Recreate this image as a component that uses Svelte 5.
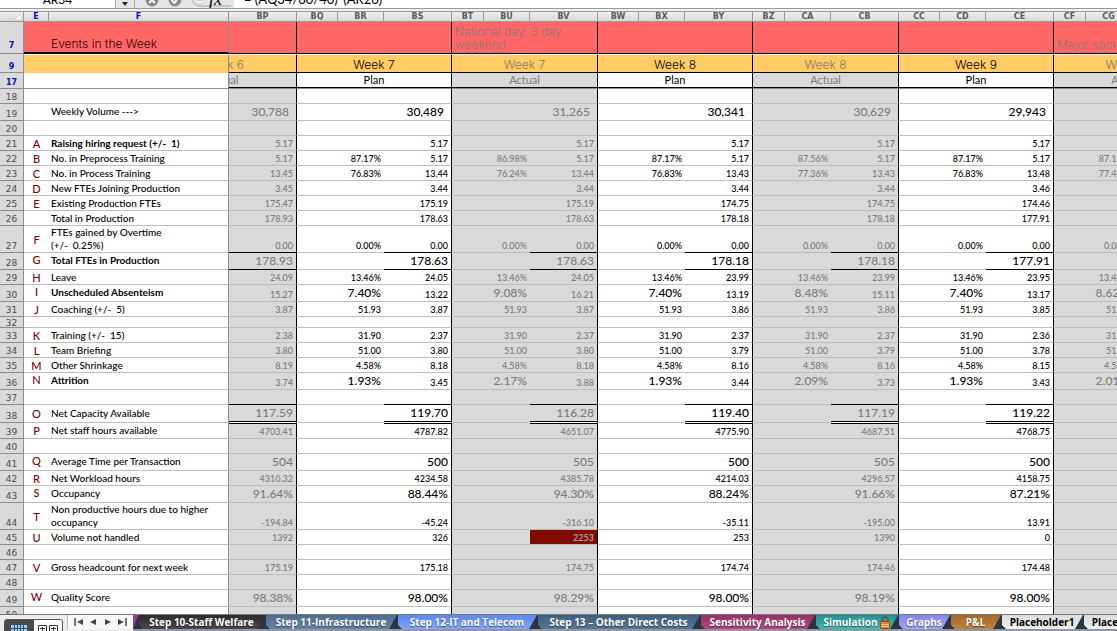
<script>
  const columns = [
    ['E', 25], ['F', 180], ['BP', 68],
    ['BQ', 41], ['BR', 46], ['BS', 68],
    ['BT', 32], ['BU', 46], ['BV', 68],
    ['BW', 41], ['BX', 46], ['BY', 68],
    ['BZ', 32], ['CA', 46], ['CB', 68],
    ['CC', 41], ['CD', 46], ['CE', 68],
    ['CF', 32], ['CG', 46], ['CH', 68]
  ];

  const weeks = [
    { week: 'Week 7', kind: 'Plan', event: '' },
    { week: 'Week 7', kind: 'Actual', event: 'National day, 3 day weekend' },
    { week: 'Week 8', kind: 'Plan', event: '' },
    { week: 'Week 8', kind: 'Actual', event: '' },
    { week: 'Week 9', kind: 'Plan', event: '' },
    { week: 'Week 9', kind: 'Actual', event: 'Major sport', low: true }
  ];

  // v: values from BP onward; p: percentage or driver column of each later week
  const rows = [
    { n: 18 },
    { n: 19, size: 'tall', label: 'Weekly Volume --->', bigV: true, inset: true, v: ['30,788', '30,489', '31,265', '30,341', '30,629', '29,943'] },
    { n: 20 },
    { n: 21, k: 'A', label: 'Raising hiring request (+/-  1)', bold: true, v: ['5.17', '5.17', '5.17', '5.17', '5.17', '5.17'] },
    { n: 22, k: 'B', label: 'No. in Preprocess Training', v: ['5.17', '5.17', '5.17', '5.17', '5.17', '5.17'], p: ['87.17%', '86.98%', '87.17%', '87.56%', '87.17%', '87.18%'] },
    { n: 23, k: 'C', label: 'No. in Process Training', v: ['13.45', '13.44', '13.44', '13.43', '13.43', '13.48'], p: ['76.83%', '76.24%', '76.83%', '77.36%', '76.83%', '77.45%'] },
    { n: 24, k: 'D', label: 'New FTEs Joining Production', v: ['3.45', '3.44', '3.44', '3.44', '3.44', '3.46'] },
    { n: 25, k: 'E', label: 'Existing Production FTEs', v: ['175.47', '175.19', '175.19', '174.75', '174.75', '174.46'] },
    { n: 26, label: 'Total in Production', v: ['178.93', '178.63', '178.63', '178.18', '178.18', '177.91'] },
    { n: 27, size: 'double', k: 'F', label: 'FTEs gained by Overtime\n(+/-  0.25%)', rule: true, v: ['0.00', '0.00', '0.00', '0.00', '0.00', '0.00'], p: ['0.00%', '0.00%', '0.00%', '0.00%', '0.00%', '0.00%'] },
    { n: 28, size: 'tall', k: 'G', label: 'Total FTEs in Production', bold: true, bigV: true, rule: true, v: ['178.93', '178.63', '178.63', '178.18', '178.18', '177.91'] },
    { n: 29, k: 'H', label: 'Leave', v: ['24.09', '24.05', '24.05', '23.99', '23.99', '23.95'], p: ['13.46%', '13.46%', '13.46%', '13.46%', '13.46%', '13.46%'] },
    { n: 30, size: 'tall', k: 'I', label: 'Unscheduled Absenteism', bold: true, bigP: true, v: ['15.27', '13.22', '16.21', '13.19', '15.11', '13.17'], p: ['7.40%', '9.08%', '7.40%', '8.48%', '7.40%', '8.62%'] },
    { n: 31, k: 'J', label: 'Coaching (+/-  5)', v: ['3.87', '3.87', '3.87', '3.86', '3.86', '3.85'], p: ['51.93', '51.93', '51.93', '51.93', '51.93', '51.93'] },
    { n: 32, size: 'short' },
    { n: 33, k: 'K', label: 'Training (+/-  15)', v: ['2.38', '2.37', '2.37', '2.37', '2.37', '2.36'], p: ['31.90', '31.90', '31.90', '31.90', '31.90', '31.90'] },
    { n: 34, k: 'L', label: 'Team Briefing', v: ['3.80', '3.80', '3.80', '3.79', '3.79', '3.78'], p: ['51.00', '51.00', '51.00', '51.00', '51.00', '51.00'] },
    { n: 35, k: 'M', label: 'Other Shrinkage', v: ['8.19', '8.18', '8.18', '8.16', '8.16', '8.15'], p: ['4.58%', '4.58%', '4.58%', '4.58%', '4.58%', '4.58%'] },
    { n: 36, size: 'tall', k: 'N', label: 'Attrition', bold: true, bigP: true, v: ['3.74', '3.45', '3.88', '3.44', '3.73', '3.43'], p: ['1.93%', '2.17%', '1.93%', '2.09%', '1.93%', '2.01%'] },
    { n: 37, rule: true },
    { n: 38, size: 'net', k: 'O', label: 'Net Capacity Available', bigV: true, upper: true, v: ['117.59', '119.70', '116.28', '119.40', '117.19', '119.22'] },
    { n: 39, size: 'mid', k: 'P', label: 'Net staff hours available', lower: true, v: ['4703.41', '4787.82', '4651.07', '4775.90', '4687.51', '4768.75'] },
    { n: 40 },
    { n: 41, size: 'tall', k: 'Q', label: 'Average Time per Transaction', bigV: true, v: ['504', '500', '505', '500', '505', '500'] },
    { n: 42, k: 'R', label: 'Net Workload hours', v: ['4310.32', '4234.58', '4385.78', '4214.03', '4296.57', '4158.75'] },
    { n: 43, size: 'tall', k: 'S', label: 'Occupancy', bigV: true, v: ['91.64%', '88.44%', '94.30%', '88.24%', '91.66%', '87.21%'] },
    { n: 44, size: 'double', k: 'T', label: 'Non productive hours due to higher\noccupancy', v: ['-194.84', '-45.24', '-316.10', '-35.11', '-195.00', '13.91'] },
    { n: 45, k: 'U', label: 'Volume not handled', alert: 2, v: ['1392', '326', '2253', '253', '1390', '0'] },
    { n: 46 },
    { n: 47, k: 'V', label: 'Gross headcount for next week', v: ['175.19', '175.18', '174.75', '174.74', '174.46', '174.48'] },
    { n: 48 },
    { n: 49, size: 'tall', k: 'W', label: 'Quality Score', bigV: true, v: ['98.38%', '98.00%', '98.29%', '98.00%', '98.19%', '98.00%'] },
    { n: 50 }
  ];

  const tabs = [
    { name: 'Step 10-Staff Welfare', tone: 'black', w: 127 },
    { name: 'Step 11-Infrastructure', tone: 'steel', w: 132 },
    { name: 'Step 12-IT and Telecom', tone: 'blue', w: 140 },
    { name: 'Step 13 – Other Direct Costs', tone: 'slate', w: 163 },
    { name: 'Sensitivity Analysis', tone: 'berry', w: 115 },
    { name: 'Simulation', tone: 'teal', w: 83, lock: true },
    { name: 'Graphs', tone: 'violet', w: 52 },
    { name: 'P&L', tone: 'brown', w: 51 },
    { name: 'Placeholder1', tone: 'plain', w: 82 },
    { name: 'Placeholder2', tone: 'plain', w: 82 }
  ];
</script>

<div class="app">
  <header class="formula-bar">
    <input class="name-box" aria-label="Name box" value="AR34" />
    <button class="drop" aria-label="Named cells">
      <svg width="6" height="4" viewBox="0 0 6 4"><path d="M0 0h6L3 4z" fill="#222" /></svg>
    </button>
    <div class="tools">
      <button aria-label="Cancel">
        <svg width="14" height="14" viewBox="0 0 14 14"><circle cx="7" cy="7" r="6.5" fill="#8b8b8b" /><path d="M4.2 4.2l5.6 5.6M9.8 4.2L4.2 9.8" stroke="#fff" stroke-width="2" /></svg>
      </button>
      <button aria-label="Enter">
        <svg width="14" height="14" viewBox="0 0 14 14"><circle cx="7" cy="7" r="6.5" fill="#8b8b8b" /><path d="M3.5 7l3 3 4-6" stroke="#fff" stroke-width="2" fill="none" /></svg>
      </button>
      <button aria-label="Formula builder" class="builder">
        <svg width="40" height="16" viewBox="0 0 40 16"><path d="M8 1a7 7 0 0 0 0 14H40M8 1H40" fill="none" stroke="#a9a9a9" /><circle cx="9" cy="8" r="5" fill="#f7f7f7" stroke="#c9c9c9" /><path d="M6 9h6" stroke="#b5b5b5" stroke-width="1.5" /></svg>
        <i>fx</i>
      </button>
    </div>
    <input class="formula" aria-label="Formula" value="= (AQ34/60/40)*(AR26)" />
  </header>

  <main class="sheet">
    <table>
      <colgroup>
        <col style:width="24px" />
        {#each columns as [name, w] (name)}<col style:width="{w}px" />{/each}
      </colgroup>
      <thead>
        <tr class="letters">
          <th class="corner" aria-label="Select all"><svg width="8" height="6" viewBox="0 0 8 6"><path d="M8 0v6H0z" fill="#fff" stroke="#aaa" stroke-width=".5" /></svg></th>
          {#each columns as [name] (name)}
            <th scope="col" class:on={name === 'E' || name === 'F'} class:edge={name === 'F'}>{name}</th>
          {/each}
        </tr>
      </thead>
      <tbody>
        <tr class="events">
          <th class="num on">7</th>
          <td class="heavy"></td>
          <td class="heavy edge title">Events in the Week</td>
          <td class="val"></td>
          {#each weeks as w}
            <td colspan="3" class="val note" class:low={w.low}>{w.event}</td>
          {/each}
        </tr>
        <tr class="weeks">
          <th class="num on">9</th>
          <td class="bare"></td>
          <td class="bare edge"></td>
          <td class="val dim"><div class="cut"><span>Week 6</span></div></td>
          {#each weeks as w}
            <td colspan="3" class="val" class:dim={w.kind === 'Actual'}>{w.week}</td>
          {/each}
        </tr>
        <tr class="kinds">
          <th class="num on">17</th>
          <td></td>
          <td class="edge"></td>
          <td class="val actual dark"><div class="cut"><span>Actual</span></div></td>
          {#each weeks as w}
            <td colspan="3" class="val dark" class:actual={w.kind === 'Actual'}>{w.kind}</td>
          {/each}
        </tr>
        {#each rows as r (r.n)}
          <tr class="data {r.size ?? ''}" class:big-v={r.bigV} class:big-p={r.bigP} class:rule={r.rule} class:upper={r.upper} class:lower={r.lower} class:inset={r.inset}>
            <th class="num">{r.n}</th>
            <td class="key">{r.k ?? ''}</td>
            <td class="label edge" class:bold={r.bold}>{r.label ?? ''}</td>
            <td class="val actual">{r.v?.[0] ?? ''}</td>
            {#each weeks as w, i}
              <td class:actual={w.kind === 'Actual'}></td>
              <td class="pct" class:actual={w.kind === 'Actual'}>{r.p?.[i] ?? ''}</td>
              <td class="val" class:actual={w.kind === 'Actual'} class:alert={r.alert === i + 1}>{r.v?.[i + 1] ?? ''}</td>
            {/each}
          </tr>
        {/each}
      </tbody>
    </table>
  </main>

  <footer>
    <div class="views">
      <button class="pressed" aria-label="Normal view">
        <svg width="16" height="12" viewBox="0 0 16 12"><path d="M0 0h16v12H0z" fill="#9fd0f5" /><path d="M0 3.5h16M0 6.5h16M0 9.5h16M3.5 0v12M6.5 0v12M9.5 0v12M12.5 0v12" stroke="#2b4a63" /></svg>
      </button>
      <button aria-label="Page layout view">
        <svg width="20" height="12" viewBox="0 0 20 12"><path d="M.5.5h8v12h-8zM11.5.5h8v12h-8z" fill="#fff" stroke="#333" /><path d="M2 3.5h5M2 6.5h5M2 9.5h5M4.5 2v10M13 3.5h5M13 6.5h5M13 9.5h5M15.5 2v10" stroke="#333" /></svg>
      </button>
    </div>
    <div class="nav">
      <button aria-label="First sheet"><svg width="10" height="8" viewBox="0 0 10 8"><path d="M1 0v8" stroke="#444" stroke-width="1.5" /><path d="M9 1v6L3 4z" fill="#444" /></svg></button>
      <button aria-label="Previous sheet"><svg width="10" height="8" viewBox="0 0 10 8"><path d="M8 1v6L2 4z" fill="#444" /></svg></button>
      <button aria-label="Next sheet"><svg width="10" height="8" viewBox="0 0 10 8"><path d="M2 1v6l6-3z" fill="#444" /></svg></button>
      <button aria-label="Last sheet"><svg width="10" height="8" viewBox="0 0 10 8"><path d="M9 0v8" stroke="#444" stroke-width="1.5" /><path d="M1 1v6l6-3z" fill="#444" /></svg></button>
    </div>
    <nav class="tabs">
      <span class="sliver"></span>
      {#each tabs as t (t.name)}
        <button class="tab {t.tone}" style:width="{t.w}px">
          <span>{t.name}</span>
          {#if t.lock}
            <svg width="10" height="13" viewBox="0 0 10 13"><path d="M2 6V4a3 3 0 0 1 6 0v2" fill="none" stroke="#555" stroke-width="1.5" /><rect x=".5" y="5.5" width="9" height="7" rx="1" fill="#e58a2c" stroke="#8d4a10" /><path d="M1 8.5h8M1 10.5h8" stroke="#f7bd76" /></svg>
          {/if}
        </button>
      {/each}
    </nav>
  </footer>
</div>

<style>
  :global(body) {
    overflow: hidden;
  }
  .app {
    display: flex;
    flex-direction: column;
    height: 100vh;
    background: #fff;
    color: #000;
    font-family: Lato, "Open Sans", sans-serif;
  }
  button, input {
    margin: 0;
    padding: 0;
    border: 0;
    background: none;
    font: inherit;
    color: inherit;
  }
  svg {
    flex: none;
  }

  .formula-bar {
    display: flex;
    align-items: flex-end;
    flex: none;
    height: 8px;
    overflow: hidden;
    background: #e6e6e6;
    border-bottom: 1px solid #999;
    box-shadow: 0 2px #f2f2f2;
  }
  .formula-bar input {
    height: 18px;
    background: #fff;
    font-size: 13px;
  }
  .formula-bar .name-box {
    width: 116px;
    text-align: center;
    border-right: 1px solid #aaa;
    box-sizing: border-box;
    font-size: 12px;
  }
  .drop {
    width: 19px;
    height: 20px;
    border-right: 1px solid #aaa;
    display: flex;
    align-items: flex-end;
    justify-content: center;
    padding-bottom: 2px;
    box-sizing: border-box;
  }
  .tools {
    display: flex;
    align-items: flex-end;
    gap: 9px;
    width: 99px;
    padding: 0 0 1px 10px;
    box-sizing: border-box;
  }
  .tools button {
    display: flex;
    align-items: flex-end;
  }
  .tools i {
    margin-left: -22px;
    font: italic 18px/16px "Liberation Serif", serif;
  }
  .formula {
    flex: 1;
    min-width: 0;
    padding-left: 10px;
  }

  .sheet {
    flex: 1;
    min-height: 0;
    overflow: hidden;
    padding-top: 2px;
  }
  table {
    width: 1200px;
    table-layout: fixed;
    border-collapse: separate;
    border-spacing: 0;
  }
  th, td {
    box-sizing: border-box;
    padding: 0;
    overflow: hidden;
    font-weight: 400;
  }
  .letters th {
    height: 11px;
    border-top: 1px solid #999;
    border-bottom: 1px solid #999;
    border-right: 1px solid #999;
    background: linear-gradient(#f0f0f0, #d8d8d8);
    color: #5a5a5a;
    font: 700 8px/9px "DejaVu Sans", sans-serif;
  }
  .letters th.on, .num.on {
    color: #0a0ac8;
  }
  .letters .corner {
    text-align: right;
    padding-right: 2px;
  }
  .corner svg {
    display: block;
    margin-left: auto;
  }
  .num {
    border-right: 1px solid #8c8c8c;
    border-bottom: 1px solid #8c8c8c;
    background: #dadada;
    color: #4a4a4a;
    font: 9px/11px "DejaVu Sans", sans-serif;
    vertical-align: bottom;
  }
  .num.on {
    font-size: 8px;
    font-weight: 700;
  }
  td.edge, th.edge {
    border-right: 1px solid #8c8c8c;
  }
  .val {
    border-right: 1px solid #000;
  }

  .events td {
    height: 32px;
    background: #f66;
    border-bottom: 1px solid #000;
    font: 300 12px/13px Inter, sans-serif;
    vertical-align: bottom;
  }
  .events .heavy {
    border-bottom-width: 2px;
  }
  .events .num {
    padding-bottom: 2px;
  }
  .events .title {
    padding: 0 0 2px 2px;
    color: #300;
  }
  .events .note {
    padding-left: 3px;
    color: #8f7474;
    vertical-align: middle;
  }
  .events .note.low {
    padding-bottom: 2px;
    vertical-align: bottom;
    white-space: nowrap;
  }
  .weeks td {
    height: 19px;
    border-top: 1px solid #fff;
    border-bottom: 1px solid #000;
    background: #fc6;
    text-align: center;
    font: 300 12px/15px Inter, sans-serif;
    vertical-align: bottom;
  }
  .weeks .bare {
    border-bottom-color: #fc6;
  }
  .weeks .dim {
    color: #85795f;
  }
  .kinds td {
    height: 16px;
    border-bottom: 1px solid #8c8c8c;
    text-align: center;
    font-size: 11px;
    line-height: 14px;
    vertical-align: top;
  }
  .kinds .dark {
    box-shadow: inset 0 -1px #000;
  }
  .cut {
    display: flex;
    justify-content: flex-end;
  }
  .cut span {
    flex: none;
    width: 146px;
  }
  .actual {
    background: #d9d9d9;
    color: #7a7a7a;
  }

  .data td {
    height: 15px;
    border-bottom: 1px solid #bdbdbd;
    font-size: 9px;
    font-weight: 500;
    line-height: 13px;
    text-align: right;
    vertical-align: bottom;
  }
  .data.short td { height: 11px; }
  .data.short .num { line-height: 8px; }
  .data.mid td { height: 16px; }
  .data.tall td { height: 17px; }
  .data.net td { height: 18px; }
  .data.double td { height: 27px; }
  .data .val, .data .pct {
    padding-right: 3px;
  }
  .data.big-v .val, .data.big-p .pct {
    font-size: 12px;
    line-height: 16px;
    vertical-align: top;
  }
  .data.inset .val {
    padding-right: 7px;
  }
  .data .key {
    text-align: center;
    vertical-align: middle;
    color: #7a0008;
    font-size: 11px;
  }
  .data .label {
    padding-left: 2px;
    text-align: left;
    vertical-align: middle;
    white-space: pre;
    font-size: 10px;
  }
  .data.tall .key, .data.tall .label {
    vertical-align: top;
    line-height: 14px;
  }
  .data .label.bold {
    font-weight: 700;
  }
  .data.rule .val {
    border-bottom-color: #000;
  }
  .data.upper .val {
    box-shadow: inset 0 -1px #000;
    border-bottom-color: #fff;
  }
  .data.lower .val {
    border-top: 1px solid #000;
  }
  .data .val.alert {
    background: #7f0a00;
    color: #a8a0a0;
    font-weight: 700;
  }

  footer {
    display: flex;
    flex: none;
    height: 17px;
    overflow: hidden;
    background: #ececec;
    border-top: 1px solid #777;
    box-sizing: border-box;
  }
  .views {
    display: flex;
    flex: none;
    width: 59px;
    height: 20px;
    margin: 4px 4px 0;
    border: 1px solid #555;
    border-radius: 3px 3px 0 0;
    box-sizing: border-box;
    background: #fafafa;
  }
  .views button {
    flex: 1;
    display: flex;
    align-items: flex-start;
    justify-content: center;
    padding-top: 5px;
  }
  .views .pressed {
    background: #4a4a4a;
  }
  .nav {
    display: flex;
    flex: none;
    align-items: center;
    justify-content: space-around;
    width: 66px;
    height: 14px;
    padding: 0 4px;
    box-sizing: border-box;
    background: #f7f7f7;
    border-left: 1px solid #bbb;
  }
  .nav button {
    display: flex;
  }
  .tabs {
    display: flex;
    flex: 1;
    min-width: 0;
    overflow: hidden;
    height: 14px;
    background: #2c3440;
    border-bottom: 2px solid #8f97a5;
  }
  .sliver {
    flex: none;
    width: 5px;
    background: #9c3f94;
    clip-path: polygon(0 0, 100% 0, 0 100%);
  }
  .tab {
    display: flex;
    flex: none;
    align-items: center;
    justify-content: center;
    gap: 2px;
    box-sizing: border-box;
    white-space: nowrap;
    color: #fff;
    font: 700 10px/13px "Open Sans", sans-serif;
    text-shadow: 0 1px 1px #0008;
    clip-path: polygon(1px 0, 100% 0, calc(100% - 8px) 100%, 5px 100%, 1px 10px);
  }
  .black { background: linear-gradient(#2c2c2c, #4a4a4a); }
  .steel { background: linear-gradient(#4d6d8f, #6684a4); }
  .blue { background: linear-gradient(#5d86f0, #7fa6ff); }
  .slate { background: linear-gradient(#3f5f7d, #55789a); }
  .berry { background: linear-gradient(#973064, #b5477d); }
  .teal { background: linear-gradient(#23918f, #45b7b4); }
  .violet { background: linear-gradient(#8484f0, #a3a3ff); }
  .brown { background: linear-gradient(#a5692c, #c0823f); }
  .plain {
    background: linear-gradient(#dcdcdc, #f2f2f2);
    color: #000;
    text-shadow: none;
  }
</style>
